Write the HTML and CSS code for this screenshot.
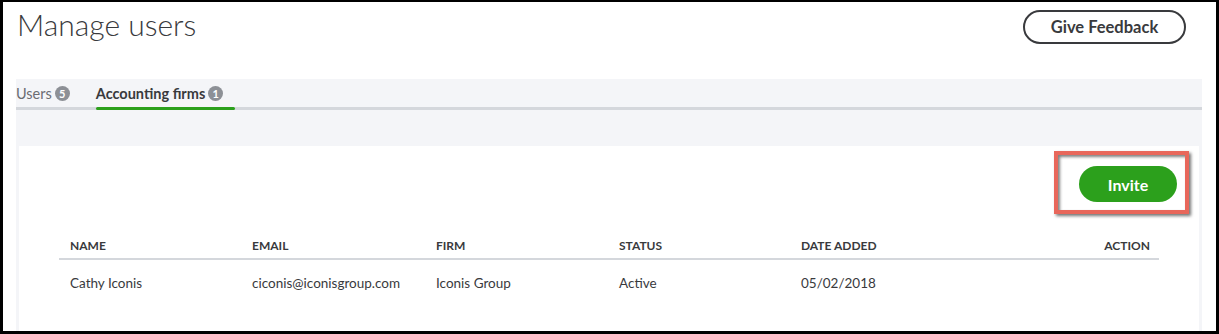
FILE: index.html
```html
<!DOCTYPE html>
<html lang="en">
<head>
    <meta charset="UTF-8">
    <meta name="viewport" content="width=device-width, initial-scale=1.0">
    <title>Manage users</title>
    <link rel="stylesheet" href="styles.css">
</head>
<body>

    <div class="frame">
        <div class="page-header">
            <h1 class="page-title">Manage users</h1>
            <button class="feedback-button">Give Feedback</button>
        </div>

        <div class="panel">
            <div class="tabs">
                <div class="tab">Users <span class="badge">5</span></div>
                <div class="tab active">Accounting firms <span class="badge">1</span></div>
            </div>

            <div class="card">
                <div class="toolbar">
                    <!-- red highlight around the invite button -->
                    <div class="highlight">
                        <button class="invite-button">Invite</button>
                    </div>
                </div>

                <div class="table">
                    <div class="table-row table-head">
                        <div class="col">Name</div>
                        <div class="col">Email</div>
                        <div class="col">Firm</div>
                        <div class="col">Status</div>
                        <div class="col">Date added</div>
                        <div class="col col-action">Action</div>
                    </div>
                    <div class="table-row">
                        <div class="col">Cathy Iconis</div>
                        <div class="col">ciconis@iconisgroup.com</div>
                        <div class="col">Iconis Group</div>
                        <div class="col">Active</div>
                        <div class="col">05/02/2018</div>
                        <div class="col col-action"></div>
                    </div>
                </div>
            </div>
        </div>
    </div>

</body>
</html>
```

FILE: styles.css
```css
/* Manage users page */
html, body {
    height: 100%;
}

body {
    margin: 0;
    font-family: Lato, "Open Sans", sans-serif;
    color: #393a3d;
    background-color: #fff;
}

.frame {
    box-sizing: border-box;
    height: 100%;
    border: 3px solid #000;
    border-top-width: 2px;
    overflow: hidden;
}

.page-header {
    display: flex;
    justify-content: space-between;
    align-items: flex-start;
    padding: 8px 30px 0 14px;
    height: 69px;
}

.page-title {
    margin: -3px 0 0;
    font-size: 30px;
    font-weight: 300;
    line-height: 34px;
    color: #393a3d;
}

.feedback-button {
    margin-top: 0;
    height: 34px;
    width: 163px;
    background: #fff;
    border: 2px solid #393a3d;
    border-radius: 17px;
    font-family: inherit;
    font-size: 16.5px;
    font-weight: 700;
    color: #393a3d;
    cursor: pointer;
}

.panel {
    margin: 0 14px 0 13px;
    background-color: #f4f5f8;
    height: 100%;
}

.tabs {
    display: flex;
    gap: 14px;
    height: 28px;
    border-bottom: 3px solid #d4d7dc;
}

.tab {
    position: relative;
    display: flex;
    align-items: center;
    gap: 3px;
    padding-right: 12px;
    font-size: 14.5px;
    color: #6b6c72;
}

.tab.active {
    font-weight: 700;
    color: #393a3d;
}

.tab.active::after {
    content: "";
    position: absolute;
    left: 0;
    right: 0;
    bottom: -3px;
    height: 3px;
    border-radius: 2px;
    background-color: #2ca01c;
}

.badge {
    display: inline-flex;
    justify-content: center;
    align-items: center;
    width: 15px;
    height: 15px;
    border-radius: 50%;
    background-color: #8d9096;
    color: #fff;
    font-size: 11px;
    font-weight: 700;
}

.card {
    margin: 36px 3px 0;
    background-color: #fff;
    height: 100%;
    padding-top: 5px;
}

.toolbar {
    display: flex;
    justify-content: flex-end;
    padding-right: 10px;
}

.highlight {
    padding: 11px 8px 8px 21px;
    border: 4px solid #e8675b;
    box-shadow: 2px 2px 3px rgba(0, 0, 0, 0.55), inset 2px 2px 3px rgba(0, 0, 0, 0.5);
}

.invite-button {
    display: block;
    width: 98px;
    height: 36px;
    border: none;
    border-radius: 18px;
    background-color: #2ca01c;
    color: #fff;
    font-family: inherit;
    font-size: 16px;
    font-weight: 700;
    cursor: pointer;
}

.table {
    margin: 18px 40px 0;
}

.table-row {
    display: grid;
    grid-template-columns: 182px 184px 183px 182px 1fr 1fr;
    align-items: center;
    height: 46px;
    font-size: 13.5px;
}

.table-head {
    height: 26px;
    border-bottom: 2px solid #d4d7dc;
    font-size: 12px;
    font-weight: 700;
    text-transform: uppercase;
}

.col {
    padding-left: 11px;
}

.col-action {
    text-align: right;
    padding-right: 9px;
}
```
